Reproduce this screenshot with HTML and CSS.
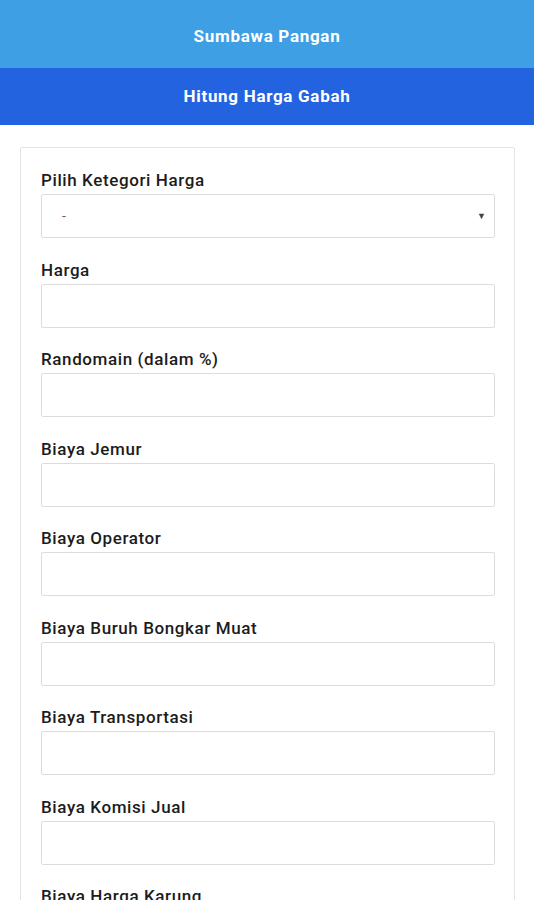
FILE: index.html
```html
<!DOCTYPE html>
<html lang="id">
<head>
<meta charset="utf-8">
<title>Hitung Harga Gabah</title>
<link rel="stylesheet" href="styles.css">
</head>
<body>
<header class="appbar">Sumbawa Pangan</header>
<div class="subbar">Hitung Harga Gabah</div>
<main class="content">
  <form class="card">
    <div class="field">
      <label class="label">Pilih Ketegori Harga</label>
      <div class="select"><span class="sel-val">-</span><span class="arrow">▼</span></div>
    </div>
    <div class="field"><label class="label">Harga</label><input class="input" type="text"></div>
    <div class="field"><label class="label">Randomain (dalam %)</label><input class="input" type="text"></div>
    <div class="field"><label class="label">Biaya Jemur</label><input class="input" type="text"></div>
    <div class="field"><label class="label">Biaya Operator</label><input class="input" type="text"></div>
    <div class="field"><label class="label">Biaya Buruh Bongkar Muat</label><input class="input" type="text"></div>
    <div class="field"><label class="label">Biaya Transportasi</label><input class="input" type="text"></div>
    <div class="field"><label class="label">Biaya Komisi Jual</label><input class="input" type="text"></div>
    <div class="field"><label class="label">Biaya Harga Karung</label><input class="input" type="text"></div>
  </form>
</main>
</body>
</html>
```
FILE: styles.css
```css
* { box-sizing: border-box; }
html, body { margin: 0; padding: 0; }
body {
  background: #ffffff;
  font-family: Roboto, "Liberation Sans", Arial, sans-serif;
  height: 900px;
  overflow: hidden;
}
.appbar {
  height: 68px;
  background: #3e9fe4;
  color: #ffffff;
  font-weight: 700;
  font-size: 17px;
  letter-spacing: 0.7px;
  display: flex;
  align-items: center;
  justify-content: center;
  padding-top: 4px;
}
.subbar {
  height: 57px;
  background: #2463e0;
  color: #ffffff;
  font-weight: 700;
  font-size: 17px;
  letter-spacing: 0.7px;
  display: flex;
  align-items: center;
  justify-content: center;
  padding-bottom: 2px;
}
.content {
  padding: 22px 19px 0 20px;
}
.card {
  border: 1px solid #e4e4e4;
  border-radius: 2px;
  padding: 22px 19px 0 20px;
  background: #fff;
}
.field {
  display: flex;
  flex-direction: column;
  margin-bottom: 21.5px;
}
.label {
  font-size: 17px;
  font-weight: 500;
  letter-spacing: 0.6px;
  color: #1c1c1c;
  line-height: 20px;
  margin-bottom: 4px;
}
.input, .select {
  height: 44px;
  width: 100%;
  border: 1px solid #dcdcdc;
  border-radius: 2px;
  background: #fff;
  font: inherit;
  margin: 0;
}
.select {
  display: flex;
  align-items: center;
  justify-content: space-between;
  padding: 0 8px 0 20px;
}
.sel-val { color: #666; font-size: 14px; }
.arrow { color: #444; font-size: 9px; }
```
